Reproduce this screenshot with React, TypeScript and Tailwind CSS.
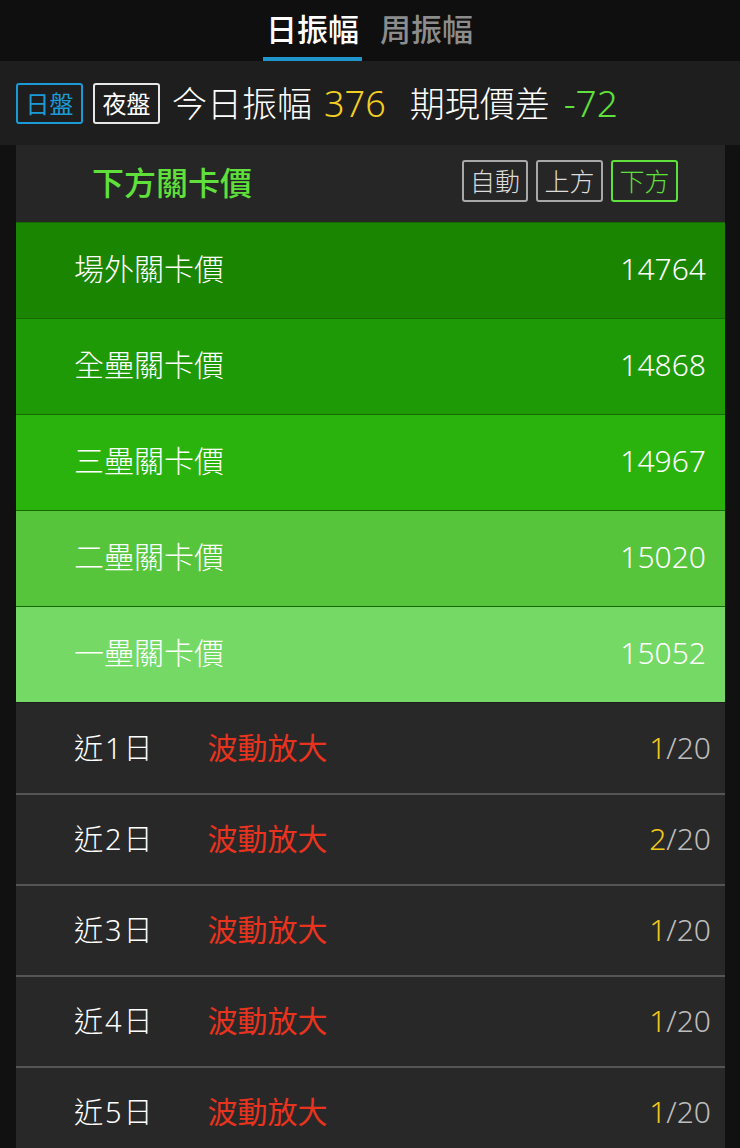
import React from "react";

const F = { fontFamily: '"Noto Sans CJK TC", "Noto Sans", sans-serif' };
const N = { fontFamily: '"Noto Sans", "Noto Sans CJK TC", sans-serif' };

const levels = [
  { name: "場外關卡價", value: "14764", bg: "bg-[#1a8500]" },
  { name: "全壘關卡價", value: "14868", bg: "bg-[#1f9a07]" },
  { name: "三壘關卡價", value: "14967", bg: "bg-[#2ab30c]" },
  { name: "二壘關卡價", value: "15020", bg: "bg-[#56c53b]" },
  { name: "一壘關卡價", value: "15052", bg: "bg-[#75d966]" },
];

const days = [
  { d: "1", n: "1" },
  { d: "2", n: "2" },
  { d: "3", n: "1" },
  { d: "4", n: "1" },
  { d: "5", n: "1" },
];

export default function App() {
  return (
    <div className="w-[740px] h-[1148px] overflow-hidden bg-[#111111] text-white" style={F}>
      {/* Tabs */}
      <div className="h-[61px] bg-[#0f0f0f] flex justify-center items-stretch gap-[18px] pr-[4px]">
        <div className="relative flex items-center px-[3px]">
          <span className="text-[31px] font-medium leading-none text-white -mt-[6px]">日振幅</span>
          <div className="absolute left-0 right-0 bottom-0 h-[4px] bg-[#1f96cc]" />
        </div>
        <div className="flex items-center">
          <span className="text-[31px] font-medium leading-none text-[#8c8c8c] -mt-[6px]">周振幅</span>
        </div>
      </div>

      {/* Summary bar */}
      <div className="h-[84px] bg-[#1e1e1e] flex items-center pl-[16px]">
        <div className="w-[67px] h-[41px] border-2 border-[#1b9ad6] rounded-[3px] flex items-center justify-center text-[24px] text-[#1b9ad6] leading-none">
          日盤
        </div>
        <div className="ml-[10px] w-[67px] h-[41px] border-2 border-[#e6e6e6] rounded-[3px] flex items-center justify-center text-[24px] text-white leading-none">
          夜盤
        </div>
        <div className="flex items-baseline">
          <span className="ml-[12px] text-[35px] font-light leading-none">今日振幅</span>
          <span className="ml-[12px] text-[36px] font-light leading-none text-[#f2cf22]" style={N}>376</span>
          <span className="ml-[24px] text-[35px] font-light leading-none">期現價差</span>
          <span className="ml-[14px] text-[37px] font-light leading-none text-[#5fe03a]" style={N}>-72</span>
        </div>
      </div>

      {/* Panel */}
      <div className="mx-[16px] w-[709px] bg-[#282828]">
        <div className="h-[77px] bg-[#262626] flex items-center pl-[76px] pr-[47px] pb-[6px]">
          <span className="text-[32px] font-medium leading-none text-[#5fe03a]">下方關卡價</span>
          <div className="ml-auto flex gap-[8px]">
            <div className="w-[66px] h-[42px] border-2 border-[#a8a8a8] rounded-[3px] flex items-center justify-center text-[25px] font-light text-[#dcdcdc] leading-none">
              自動
            </div>
            <div className="w-[67px] h-[42px] border-2 border-[#a8a8a8] rounded-[3px] flex items-center justify-center text-[25px] font-light text-[#dcdcdc] leading-none">
              上方
            </div>
            <div className="w-[67px] h-[42px] border-2 border-[#5fe03a] rounded-[3px] flex items-center justify-center text-[25px] font-light text-[#5fe03a] leading-none">
              下方
            </div>
          </div>
        </div>

        {levels.map((l) => (
          <div
            key={l.name}
            className={`h-[96px] ${l.bg} border-t border-[#146a00] flex items-center pl-[58px] pr-[19px] pb-[6px]`}
          >
            <div className="flex-1 flex items-baseline">
              <span className="text-[30px] font-light leading-none text-white">{l.name}</span>
              <span className="ml-auto text-[30px] font-light leading-none text-white" style={N}>{l.value}</span>
            </div>
          </div>
        ))}

        {days.map((r, i) => (
          <div
            key={r.d}
            className={`h-[91px] flex items-center pl-[58px] pr-[14px] pb-[3px] ${i > 0 ? "border-t-2 border-[#555555]" : "border-t border-[#1c1c1c]"}`}
          >
            <div className="flex-1 flex items-baseline">
              <span className="text-[29px] font-light leading-none text-white">
                近<span className="mx-[2px]" style={N}>{r.d}</span>日
              </span>
              <span className="ml-[55px] text-[30px] leading-none text-[#e8331f]">波動放大</span>
              <span className="ml-auto text-[30px] font-light leading-none text-[#bdbdbd]" style={N}>
                <span className="text-[#f2c81c]">{r.n}</span>/20
              </span>
            </div>
          </div>
        ))}
      </div>
    </div>
  );
}
